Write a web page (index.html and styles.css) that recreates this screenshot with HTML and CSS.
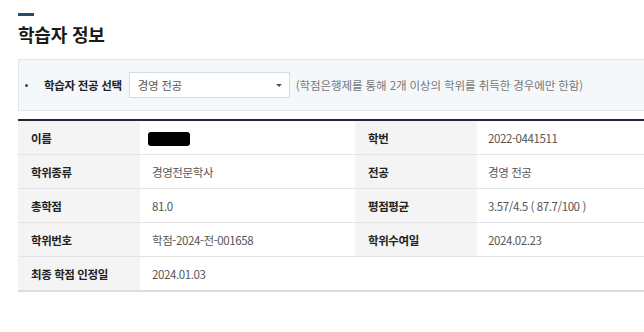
FILE: index.html
```html
<!DOCTYPE html>
<html lang="ko">
<head>
<meta charset="utf-8">
<link rel="stylesheet" href="styles.css">
</head>
<body>
<div class="page">
  <div class="dash"></div>
  <h2 class="title">학습자 정보</h2>
  <div class="filter">
    <span class="bullet"></span>
    <span class="filter-label">학습자 전공 선택</span>
    <div class="select">
      <span>경영 전공</span>
      <span class="caret"></span>
    </div>
    <span class="note">(학점은행제를 통해 2개 이상의 학위를 취득한 경우에만 한함)</span>
  </div>
  <table class="info">
    <colgroup>
      <col class="c-l1"><col class="c-v1"><col class="c-l2"><col>
    </colgroup>
    <tr>
      <th>이름</th><td><span class="redact"></span></td>
      <th>학번</th><td>2022-0441511</td>
    </tr>
    <tr>
      <th>학위종류</th><td>경영전문학사</td>
      <th>전공</th><td>경영 전공</td>
    </tr>
    <tr>
      <th>총학점</th><td>81.0</td>
      <th>평점평균</th><td>3.57/4.5 ( 87.7/100 )</td>
    </tr>
    <tr>
      <th>학위번호</th><td>학점-2024-전-001658</td>
      <th>학위수여일</th><td>2024.02.23</td>
    </tr>
    <tr class="last">
      <th>최종 학점 인정일</th><td colspan="3">2024.01.03</td>
    </tr>
  </table>
</div>
</body>
</html>
```
FILE: styles.css
```css
html, body {
  margin: 0;
  padding: 0;
  background: #ffffff;
  overflow: hidden;
}
body {
  font-family: "Noto Sans CJK KR", "Noto Sans", sans-serif;
  color: #333;
}
.page {
  padding: 13px 0 0 18px;
}
.dash {
  width: 16px;
  height: 3px;
  background: #1d4e6f;
}
.title {
  margin: 5px 0 0 0;
  font-size: 18px;
  line-height: 26px;
  font-weight: 700;
  color: #1a1a1a;
  letter-spacing: -0.2px;
}
.filter {
  margin-top: 12px;
  height: 50px;
  border: 1px solid #e2e6eb;
  border-right: none;
  background: #f5f8fb;
  display: flex;
  align-items: center;
  padding-left: 6px;
  font-size: 11.5px;
  letter-spacing: -0.3px;
}
.bullet {
  width: 3px;
  height: 3px;
  border-radius: 50%;
  background: #444;
  margin-right: 16px;
}
.filter-label {
  font-weight: 700;
  color: #222;
  margin-right: 7px;
}
.select {
  width: 161px;
  height: 26px;
  box-sizing: border-box;
  border: 1px solid #d6d9dd;
  background: #fff;
  display: flex;
  align-items: center;
  justify-content: space-between;
  padding: 0 7px 0 8px;
  color: #555;
  font-size: 11.5px;
}
.caret {
  width: 0;
  height: 0;
  border-left: 3px solid transparent;
  border-right: 3px solid transparent;
  border-top: 3px solid #555;
}
.note {
  margin-left: 6px;
  color: #777;
  font-size: 11.5px;
  letter-spacing: -0.1px;
}
.info {
  margin-top: 8px;
  width: 626px;
  table-layout: fixed;
  border-collapse: collapse;
  border-top: 2px solid #1e2a38;
  font-size: 11.5px;
  letter-spacing: -0.4px;
}
.c-l1 { width: 122px; }
.c-v1 { width: 215px; }
.c-l2 { width: 122px; }
.info th,
.info td {
  height: 33px;
  padding: 0 0 0 13px;
  border-bottom: 1px solid #e3e3e3;
  text-align: left;
  vertical-align: middle;
}
.info th {
  background: #f4f4f4;
  font-weight: 700;
  color: #222;
}
.info td {
  color: #555;
  font-weight: 400;
}
.info td:nth-child(2) {
  padding-left: 12px;
}
.info td:nth-child(4) {
  padding-left: 11px;
}
.info tr.last th,
.info tr.last td {
  border-bottom: 2px solid #dcdcdc;
}
.redact {
  display: inline-block;
  width: 42px;
  height: 14px;
  background: #000;
  border-radius: 3px;
  vertical-align: middle;
  margin-left: -4px;
}
```
